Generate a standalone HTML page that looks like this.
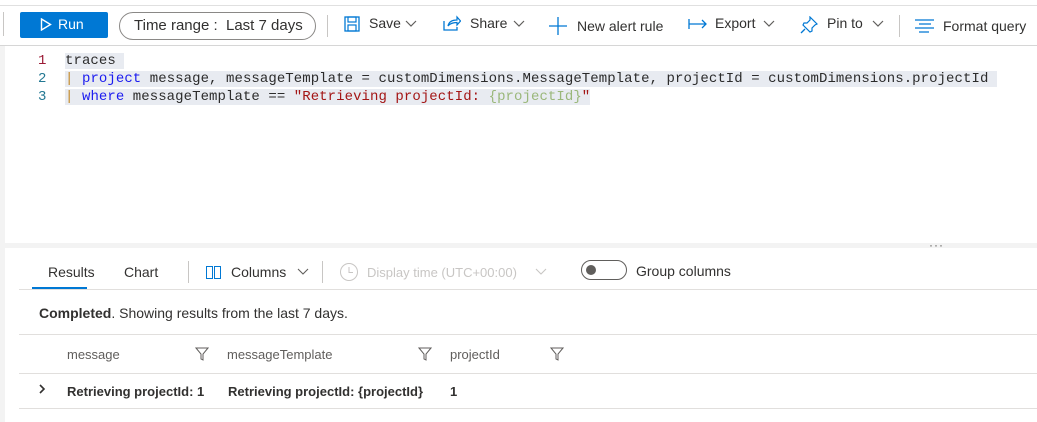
<!DOCTYPE html>
<html><head><meta charset="utf-8"><style>
*{box-sizing:border-box;margin:0;padding:0}
body{width:1037px;height:422px;overflow:hidden;background:#fff;font-family:"Liberation Sans",sans-serif;position:relative;color:#323130}
.a{position:absolute}
.tb{font-size:14px;color:#323130;white-space:nowrap}
.code{font-family:"Liberation Mono",monospace;font-size:14px;white-space:pre;line-height:18px;letter-spacing:0.07px;color:#2b2b2b}
.hl{background:#e8ebf1}
.kw{color:#1b1bf0}.st{color:#a31515}.gr{color:#9ab77a}
.ln{color:#237893;font-family:"Liberation Mono",monospace;font-size:14px}
.bar{color:#c48a2a}
.hline{position:absolute;height:1px;background:#e1dfdd}
</style></head><body>
<div class="hline" style="left:0;top:5px;width:1037px;background:#e0e0e0"></div>
<div class="a" style="left:3px;top:12px;width:1px;height:24px;background:#c8c6c4"></div>
<div class="a" style="left:20px;top:12px;width:88px;height:26px;background:#0078d4;border-radius:2px;color:#fff;font-size:14px;line-height:24px">
<svg class="a" style="left:20px;top:6px" width="12" height="13" viewBox="0 0 12 13"><path d="M1.5 1 L10.5 6.5 L1.5 12 Z" fill="none" stroke="#fff" stroke-width="1.4"/></svg>
<span class="a" style="left:38px;top:0">Run</span></div>
<div class="a tb" style="left:119px;top:12px;width:197px;height:28px;border:1px solid #8a8886;border-radius:14px;font-size:15px;line-height:26px;padding-left:14px">Time range :&nbsp; <span style="color:#323130">Last 7 days</span></div>
<div class="a" style="left:327px;top:15px;width:1px;height:22px;background:#c8c6c4"></div>
<svg class="a" style="left:344px;top:16px" width="16" height="16" viewBox="0 0 16 16"><rect x="1" y="1" width="14" height="14" fill="none" stroke="#0078d4" stroke-width="1.3"/><rect x="4" y="1" width="8" height="5" fill="none" stroke="#0078d4" stroke-width="1.2"/><rect x="4" y="9" width="8" height="6" fill="none" stroke="#0078d4" stroke-width="1.2"/></svg>
<div class="a tb" style="left:369px;top:15px">Save</div>
<svg class="a" style="left:405px;top:20px" width="12" height="8"><path d="M1 1l5 5 5-5" fill="none" stroke="#605e5c" stroke-width="1.2"/></svg>
<svg class="a" style="left:443px;top:15px" width="18" height="16" viewBox="0 0 18 16"><path d="M1 6v9h13v-3" fill="none" stroke="#0078d4" stroke-width="1.3"/><path d="M5 11c1-5 5-6 9-6V2l3.5 4-3.5 4V7.5c-4 0-7 1-9 3.5z" fill="none" stroke="#0078d4" stroke-width="1.2"/></svg>
<div class="a tb" style="left:470px;top:15px">Share</div>
<svg class="a" style="left:513px;top:20px" width="12" height="8"><path d="M1 1l5 5 5-5" fill="none" stroke="#605e5c" stroke-width="1.2"/></svg>
<svg class="a" style="left:549px;top:17px" width="18" height="18"><path d="M9 0v18M0 9h18" stroke="#0078d4" stroke-width="1.3"/></svg>
<div class="a tb" style="left:577px;top:18px">New alert rule</div>
<svg class="a" style="left:688px;top:19px" width="20" height="10"><path d="M1 0v10M1 5h17M14 1l4 4-4 4" fill="none" stroke="#0078d4" stroke-width="1.3"/></svg>
<div class="a tb" style="left:715px;top:15px">Export</div>
<svg class="a" style="left:763px;top:20px" width="12" height="8"><path d="M1 1l5 5 5-5" fill="none" stroke="#605e5c" stroke-width="1.2"/></svg>
<svg class="a" style="left:800px;top:16px" width="18" height="18" viewBox="0 0 18 18"><path d="M10 1l7 7-2 1-3 3 0 3-2 1-7-7 1-2 3 0 3-3z" fill="none" stroke="#0078d4" stroke-width="1.2"/><path d="M5 13l-4 4" stroke="#0078d4" stroke-width="1.3"/></svg>
<div class="a tb" style="left:827px;top:15px">Pin to</div>
<svg class="a" style="left:872px;top:20px" width="12" height="8"><path d="M1 1l5 5 5-5" fill="none" stroke="#605e5c" stroke-width="1.2"/></svg>
<div class="a" style="left:899px;top:15px;width:1px;height:22px;background:#c8c6c4"></div>
<svg class="a" style="left:915px;top:19px" width="20" height="14"><path d="M0 1h19M4 5h12M0 9h19M4 13h10" stroke="#0078d4" stroke-width="1.3"/></svg>
<div class="a tb" style="left:943px;top:18px">Format query</div>
<div class="hline" style="left:0;top:45px;width:1037px;background:#d6d6d6"></div>
<div class="a" style="left:0;top:46px;width:5px;height:376px;background:#f3f3f3"></div>

<div class="a ln" style="left:38px;top:52px;line-height:18px;color:#237893"><span style="color:#9b1a35">1</span><br>2<br>3</div>
<div class="a code" style="left:65px;top:52px"><span class="hl">traces </span>
<span class="hl"><span class="bar">|</span> <span class="kw">project</span> message, messageTemplate = customDimensions.MessageTemplate, projectId = customDimensions.projectId </span>
<span class="hl"><span class="bar">|</span> <span class="kw">where</span> messageTemplate == <span class="st">"Retrieving projectId: </span><span class="gr">{projectId}</span><span class="st">"</span></span></div>

<div class="a" style="left:0;top:243px;width:1037px;height:5px;background:#f3f3f3"></div>
<div class="a" style="left:929px;top:238px;font-size:12px;color:#605e5c;letter-spacing:1px">···</div>

<div class="a tb" style="left:48px;top:264px;font-size:14px">Results</div>
<div class="a" style="left:32px;top:287px;width:55px;height:2px;background:#0078d4"></div>
<div class="a tb" style="left:124px;top:264px">Chart</div>
<div class="a" style="left:188px;top:261px;width:1px;height:22px;background:#c8c6c4"></div>
<svg class="a" style="left:206px;top:266px" width="16" height="13"><rect x="0.5" y="0.5" width="6" height="12" fill="none" stroke="#0078d4"/><rect x="8.5" y="0.5" width="6" height="12" fill="none" stroke="#0078d4"/></svg>
<div class="a tb" style="left:231px;top:264px">Columns</div>
<svg class="a" style="left:297px;top:268px" width="12" height="8"><path d="M1 1l5 5 5-5" fill="none" stroke="#605e5c" stroke-width="1.1"/></svg>
<div class="a" style="left:322px;top:261px;width:1px;height:22px;background:#c8c6c4"></div>
<svg class="a" style="left:339px;top:262px" width="20" height="20"><circle cx="10" cy="10" r="8.5" fill="none" stroke="#c8c6c4"/><path d="M10 5v5.5h4" fill="none" stroke="#c8c6c4"/></svg>
<div class="a tb" style="left:367px;top:265px;color:#c8c6c4;font-size:13px">Display time (UTC+00:00)</div>
<svg class="a" style="left:535px;top:268px" width="12" height="8"><path d="M1 1l5 5 5-5" fill="none" stroke="#c8c6c4" stroke-width="1.1"/></svg>
<div class="a" style="left:581px;top:260px;width:46px;height:20px;border:1px solid #605e5c;border-radius:10px"><div class="a" style="left:4px;top:4px;width:10px;height:10px;border-radius:5px;background:#605e5c"></div></div>
<div class="a tb" style="left:636px;top:263px">Group columns</div>
<div class="hline" style="left:19px;top:289px;width:1018px"></div>

<div class="a tb" style="left:39px;top:305px"><b style="font-weight:600">Completed</b>. Showing results from the last 7 days.</div>
<div class="hline" style="left:19px;top:334px;width:1018px"></div>

<div class="a tb" style="left:67px;top:347px;color:#605e5c;font-size:13px">message</div>
<svg class="a" style="left:195px;top:347px" width="14" height="14"><path d="M1 1h12L8 7v6L6 12V7z" fill="none" stroke="#605e5c"/></svg>
<div class="a tb" style="left:227px;top:347px;color:#605e5c;font-size:13px">messageTemplate</div>
<svg class="a" style="left:418px;top:347px" width="14" height="14"><path d="M1 1h12L8 7v6L6 12V7z" fill="none" stroke="#605e5c"/></svg>
<div class="a tb" style="left:450px;top:347px;color:#605e5c;font-size:13px">projectId</div>
<svg class="a" style="left:550px;top:347px" width="14" height="14"><path d="M1 1h12L8 7v6L6 12V7z" fill="none" stroke="#605e5c"/></svg>
<div class="hline" style="left:19px;top:373px;width:1018px"></div>

<svg class="a" style="left:38px;top:384px" width="8" height="10"><path d="M2 1l4 4-4 4" fill="none" stroke="#323130" stroke-width="1.6"/></svg>
<div class="a tb" style="left:67px;top:384px;font-size:13px;font-weight:600">Retrieving projectId: 1</div>
<div class="a tb" style="left:228px;top:384px;font-size:13px;font-weight:600">Retrieving projectId: {projectId}</div>
<div class="a tb" style="left:450px;top:384px;font-size:13px;font-weight:600">1</div>
<div class="hline" style="left:19px;top:408px;width:1018px"></div>
</body></html>
